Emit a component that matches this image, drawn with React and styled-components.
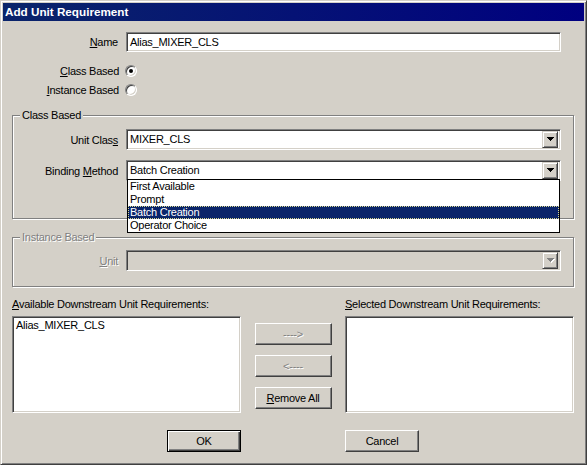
import styled, { createGlobalStyle } from "styled-components";

const FACE = "#d4d0c8";

// Classic Windows dialog look
const GlobalStyle = createGlobalStyle`
  html, body {
    margin: 0;
    padding: 0;
    background: ${FACE};
  }
  body {
    font-family: "Liberation Sans", Arial, sans-serif;
    font-size: 11px;
    letter-spacing: -0.25px;
    color: #000;
  }
`;

const Window = styled.div`
  box-sizing: border-box;
  width: 587px;
  height: 465px;
  background: ${FACE};
  border: 1px solid;
  border-color: ${FACE} #404040 #404040 ${FACE};
  box-shadow: inset 1px 1px #fff, inset -1px -1px #808080;
  padding: 2px;
  display: flex;
  flex-direction: column;
`;

const TitleBar = styled.div`
  height: 18px;
  line-height: 18px;
  padding-left: 2px;
  background: linear-gradient(to right, #0a246a, #000080);
  color: #fff;
  font-weight: bold;
  font-size: 11.7px;
  letter-spacing: 0;
  white-space: nowrap;
`;

const Body = styled.div`
  padding: 0 10px 0 9px;
  display: flex;
  flex-direction: column;
`;

const Row = styled.div`
  display: flex;
  align-items: center;
  height: ${({ $height }) => $height || 21}px;
  margin-top: ${({ $top }) => $top || 0}px;
  gap: ${({ $gap }) => $gap || 8}px;
  position: relative;
`;

const Label = styled.div`
  width: ${({ $width }) => $width}px;
  flex: none;
  text-align: right;
  white-space: nowrap;
  color: ${({ $disabled }) => ($disabled ? "#808080" : "#000")};
  text-shadow: ${({ $disabled }) => ($disabled ? "1px 1px #fff" : "none")};
`;

const Sunken = styled.div`
  box-sizing: border-box;
  border: 1px solid;
  border-color: #808080 #fff #fff #808080;
  box-shadow: inset 1px 1px #404040, inset -1px -1px ${FACE};
`;

const TextField = styled(Sunken)`
  width: 435px;
  height: 20px;
  background: #fff;
  padding: 0 3px;
  line-height: 18px;
  white-space: nowrap;
`;

const Radio = styled.span`
  box-sizing: border-box;
  width: 12px;
  height: 12px;
  border-radius: 50%;
  border: 1px solid;
  border-color: #808080 #fff #fff #808080;
  box-shadow: inset 1px 1px #404040, inset -1px -1px ${FACE};
  background: #fff;
  display: flex;
  align-items: center;
  justify-content: center;

  &::after {
    content: "";
    width: 4px;
    height: 4px;
    border-radius: 50%;
    background: ${({ $checked }) => ($checked ? "#000" : "transparent")};
  }
`;

const GroupBox = styled.div`
  position: relative;
  box-sizing: border-box;
  height: ${({ $height }) => $height}px;
  margin-top: ${({ $top }) => $top}px;
  border: 1px solid #808080;
  box-shadow: inset 1px 1px #fff, 1px 1px #fff;
  padding: ${({ $padTop }) => $padTop}px 12px 0 0;
  display: flex;
  flex-direction: column;
`;

const Legend = styled.span`
  position: absolute;
  top: -8px;
  left: 7px;
  padding: 0 2px;
  line-height: 14px;
  background: ${FACE};
  color: ${({ $disabled }) => ($disabled ? "#808080" : "#000")};
  text-shadow: ${({ $disabled }) => ($disabled ? "1px 1px #fff" : "none")};
`;

const Combo = styled(Sunken)`
  position: relative;
  flex: 1;
  height: 21px;
  display: flex;
  align-items: center;
  background: ${({ $disabled }) => ($disabled ? FACE : "#fff")};
  padding: 1px 2px 2px 3px;
`;

const ComboText = styled.div`
  flex: 1;
  white-space: nowrap;
  line-height: 17px;
`;

const ComboButton = styled.div`
  box-sizing: border-box;
  width: 16px;
  height: 17px;
  margin-top: 1px;
  background: ${FACE};
  border: 1px solid;
  border-color: ${FACE} #404040 #404040 ${FACE};
  box-shadow: inset 1px 1px #fff, inset -1px -1px #808080;
  display: flex;
  align-items: center;
  justify-content: center;
  padding-left: 1px;
`;

const ARROW = "M0 0h7v1h-1v1h-1v1h-1v1h-1v-1h-1v-1h-1v-1h-1z";

const Arrow = ({ disabled }) => (
  <svg width="8" height="5" viewBox="0 0 8 5" shapeRendering="crispEdges">
    {disabled && <path d={ARROW} fill="#fff" transform="translate(1 1)" />}
    <path d={ARROW} fill={disabled ? "#808080" : "#000"} />
  </svg>
);

const DropList = styled.div`
  position: absolute;
  left: 0;
  right: 0;
  top: calc(100% - 1px);
  z-index: 2;
  background: #fff;
  border: 1px solid #000;
`;

const DropItem = styled.div`
  box-sizing: border-box;
  height: 13px;
  line-height: 13px;
  padding-left: 2px;
  white-space: nowrap;
  background: ${({ $selected }) => ($selected ? "#0a246a" : "#fff")};
  color: ${({ $selected }) => ($selected ? "#fff" : "#000")};
  outline: ${({ $selected }) => ($selected ? "1px dotted #d8d890" : "none")};
  outline-offset: -1px;
`;

const ListsGrid = styled.div`
  margin-top: 11px;
  display: grid;
  grid-template-columns: 229px 77px 229px;
  justify-content: space-between;
  grid-template-rows: 13px 97px 22px;
  row-gap: 5px;
`;

const Caption = styled.div`
  line-height: 13px;
  white-space: nowrap;
  grid-column: ${({ $col }) => $col};
`;

const ListBox = styled(Sunken)`
  background: #fff;
  padding: 2px 3px;
`;

const ListItem = styled.div`
  line-height: 13px;
  white-space: nowrap;
`;

const ButtonStack = styled.div`
  padding-top: 7px;
  display: flex;
  flex-direction: column;
  gap: 10px;
`;

const Button = styled.div`
  box-sizing: border-box;
  width: ${({ $width }) => $width || 77}px;
  height: 22px;
  background: ${FACE};
  border: 1px solid;
  border-color: #fff #404040 #404040 #fff;
  box-shadow: inset -1px -1px #808080;
  display: flex;
  align-items: center;
  justify-content: center;
  white-space: nowrap;
  color: ${({ $disabled }) => ($disabled ? "#808080" : "#000")};
  text-shadow: ${({ $disabled }) => ($disabled ? "1px 1px #fff" : "none")};
  justify-self: ${({ $align }) => $align || "auto"};
  grid-column: ${({ $col }) => $col || "auto"};
  margin-top: ${({ $top }) => $top || 0}px;
`;

const DefaultButton = styled(Button)`
  border: 1px solid #000;
  box-shadow: inset 1px 1px #fff, inset -1px -1px #404040, inset -2px -2px #808080;
`;

const bindingOptions = ["First Available", "Prompt", "Batch Creation", "Operator Choice"];

export default function App() {
  return (
    <>
      <GlobalStyle />
      <Window>
        <TitleBar>Add Unit Requirement</TitleBar>
        <Body>
          <Row $top={11} $height={20}>
            <Label $width={106}>
              <u>N</u>ame
            </Label>
            <TextField>Alias_MIXER_CLS</TextField>
          </Row>
          <Row $top={9} $height={19} $gap={6}>
            <Label $width={107}>
              <u>C</u>lass Based
            </Label>
            <Radio $checked />
          </Row>
          <Row $height={19} $gap={6}>
            <Label $width={107}>
              <u>I</u>nstance Based
            </Label>
            <Radio />
          </Row>

          <GroupBox $top={16} $height={104} $padTop={13}>
            <Legend>Class Based</Legend>
            <Row>
              <Label $width={105}>
                Unit Clas<u>s</u>
              </Label>
              <Combo>
                <ComboText>MIXER_CLS</ComboText>
                <ComboButton>
                  <Arrow />
                </ComboButton>
              </Combo>
            </Row>
            <Row $top={10}>
              <Label $width={105}>
                Binding <u>M</u>ethod
              </Label>
              <Combo>
                <ComboText>Batch Creation</ComboText>
                <ComboButton>
                  <Arrow />
                </ComboButton>
                <DropList>
                  {bindingOptions.map((opt) => (
                    <DropItem key={opt} $selected={opt === "Batch Creation"}>
                      {opt}
                    </DropItem>
                  ))}
                </DropList>
              </Combo>
            </Row>
          </GroupBox>

          <GroupBox $top={18} $height={50} $padTop={12}>
            <Legend $disabled>Instance Based</Legend>
            <Row>
              <Label $width={105} $disabled>
                <u>U</u>nit
              </Label>
              <Combo $disabled>
                <ComboText />
                <ComboButton>
                  <Arrow disabled />
                </ComboButton>
              </Combo>
            </Row>
          </GroupBox>

          <ListsGrid>
            <Caption $col={1}>
              <u>A</u>vailable Downstream Unit Requirements:
            </Caption>
            <Caption $col={3}>
              <u>S</u>elected Downstream Unit Requirements:
            </Caption>
            <ListBox>
              <ListItem>Alias_MIXER_CLS</ListItem>
            </ListBox>
            <ButtonStack>
              <Button $disabled>----&gt;</Button>
              <Button $disabled>&lt;----</Button>
              <Button>
                <u>R</u>emove All
              </Button>
            </ButtonStack>
            <ListBox />
            <DefaultButton $width={74} $col={1} $align="end" $top={12}>
              OK
            </DefaultButton>
            <Button $width={74} $col={3} $align="start" $top={12}>
              Cancel
            </Button>
          </ListsGrid>
        </Body>
      </Window>
    </>
  );
}
